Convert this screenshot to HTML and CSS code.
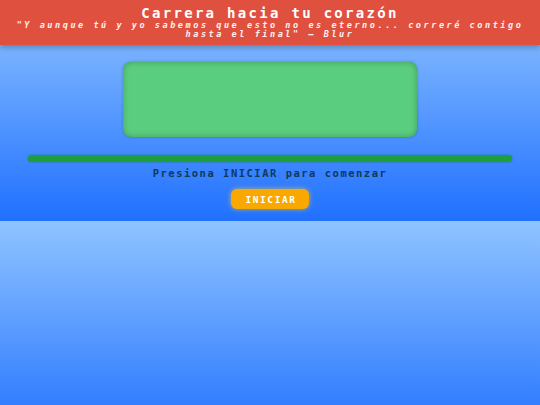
FILE: index.html
```html
<!DOCTYPE html>
<html lang="es">
<head>
<meta charset="utf-8">
<title>Carrera hacia tu corazón</title>
<link rel="stylesheet" href="styles.css">
</head>
<body>
<header class="top">
  <h1 class="title">Carrera hacia tu corazón</h1>
  <p class="quote">"Y aunque tú y yo sabemos que esto no es eterno... correré contigo<br>hasta el final" — Blur</p>
</header>
<main class="stage">
  <div class="track"></div>
  <div class="bar"></div>
  <p class="status">Presiona INICIAR para comenzar</p>
  <button class="start">INICIAR</button>
</main>
</body>
</html>
```
FILE: styles.css
```css
html {
  background: linear-gradient(180deg, #90c4ff 0%, #2070ff 100%);
  background-size: 100% 221px;
  background-repeat: repeat-y;
}
body {
  margin: 0;
  font-family: "DejaVu Sans Mono", "Liberation Mono", monospace;
}
.top {
  height: 45px;
  box-sizing: border-box;
  background: #e0503f;
  box-shadow: 0 2px 6px rgba(0, 0, 0, 0.3);
  display: flex;
  flex-direction: column;
  align-items: center;
  padding-top: 5px;
  position: relative;
}
.title {
  margin: 0;
  font-size: 14px;
  letter-spacing: 2.3px;
  line-height: 16px;
  font-weight: bold;
  color: #ffffff;
  text-align: center;
}
.quote {
  margin: 0;
  font-size: 8.5px;
  letter-spacing: 2.56px;
  line-height: 8.5px;
  font-style: italic;
  font-weight: bold;
  color: #fff2ee;
  text-align: center;
}
.stage {
  display: flex;
  flex-direction: column;
  align-items: center;
  height: 176px;
  box-sizing: border-box;
  padding-top: 17px;
}
.track {
  width: 294px;
  height: 75px;
  background: #5ace7e;
  border-radius: 8px;
  box-shadow: inset 0 0 6px rgba(0, 0, 0, 0.25), 0 0 3px rgba(0, 80, 30, 0.35);
}
.bar {
  margin-top: 18px;
  width: 484px;
  height: 7px;
  border-radius: 4px;
  background: #1f9e3f;
  box-shadow: 0 0 2px rgba(20, 120, 40, 0.8);
}
.status {
  margin: 5px 0 0;
  font-size: 10.5px;
  letter-spacing: 1.5px;
  line-height: 12px;
  font-weight: bold;
  color: #0f3a58;
}
.start {
  margin-top: 10px;
  width: 78px;
  height: 20px;
  border: none;
  border-radius: 6px;
  background: #f9a800;
  color: #ffffff;
  font-family: "DejaVu Sans Mono", "Liberation Mono", monospace;
  font-size: 9.5px;
  font-weight: bold;
  letter-spacing: 1.6px;
  padding: 0 0 0 2px;
  box-shadow: 0 0 5px rgba(255, 200, 40, 0.7);
}
```
